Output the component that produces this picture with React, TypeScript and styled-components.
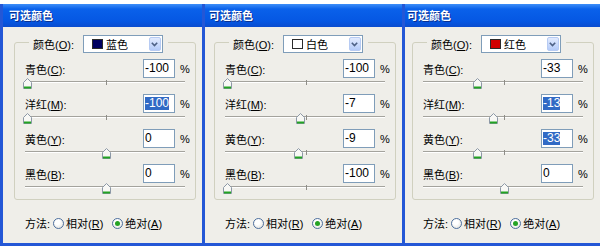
import styled, { createGlobalStyle } from "styled-components"

const GlobalStyle = createGlobalStyle`
  html, body {
    margin: 0;
    padding: 0;
    background: #fff;
  }
  body {
    font-family: "Liberation Sans", "Noto Sans CJK SC", sans-serif;
    font-size: 11px;
    color: #000;
  }
`

const Screen = styled.div`
  display: flex;
  width: 600px;
  height: 250px;
  padding-top: 4px;
  box-sizing: border-box;
  overflow: hidden;
  background: #fff;
`

const Window = styled.div<{ $width?: number }>`
  ${p => (p.$width ? `width: ${p.$width}px; flex: none;` : "flex: 1;")}
  height: 242px;
  box-sizing: border-box;
  display: flex;
  flex-direction: column;
  border-left: 3px solid #2457d6;
  border-bottom: 3px solid #2457d6;
  background: #efeee9;
`

const TitleBar = styled.div<{ $inset: number }>`
  height: 23px;
  line-height: 23px;
  padding-left: ${p => p.$inset - 5}px;
  background: linear-gradient(#3d8ef8 0%, #0a61ea 22%, #0557e3 75%, #0a4ccf 100%);
  color: #fff;
  font-family: "Noto Sans CJK SC", sans-serif;
  font-size: 11px;
  font-weight: bold;
  text-shadow: 1px 1px 0 #0b2f8f;
`

const Body = styled.div<{ $inset: number }>`
  flex: 1;
  padding: 15px 0 0 ${p => p.$inset}px;
`

const Group = styled.div`
  width: 182px;
  height: 158px;
  box-sizing: border-box;
  border: 1px solid #d0d0bf;
  border-radius: 3px;
  display: flex;
  flex-direction: column;
`

const Legend = styled.div`
  display: flex;
  align-items: center;
  gap: 9px;
  align-self: flex-start;
  height: 18px;
  margin: -8px 0 0 14px;
  padding: 0 5px 0 4px;
  background: #efeee9;
`

const Label = styled.span`
  font-family: "Liberation Sans", "Noto Sans CJK SC", sans-serif;
  white-space: nowrap;
`

const ColorSelect = styled.div`
  width: 80px;
  height: 18px;
  box-sizing: border-box;
  border: 1px solid #7f9db9;
  background: #fff;
  display: flex;
  align-items: center;
  padding-left: 8px;
`

const Swatch = styled.span<{ $color: string }>`
  width: 11px;
  height: 10px;
  box-sizing: border-box;
  border: 1px solid #2a2a2a;
  background: ${p => p.$color};
  margin-right: 3px;
`

const SelectText = styled.span`
  flex: 1;
  font-family: "Noto Sans CJK SC", sans-serif;
`

const DropButton = styled.span`
  width: 12px;
  height: 14px;
  margin-right: 1px;
  box-sizing: border-box;
  border: 1px solid #b7cbf3;
  border-radius: 2px;
  background: linear-gradient(#e2ebfe, #b4cbf9);
  display: flex;
  align-items: center;
  justify-content: center;
`

const Fields = styled.div`
  margin-top: 6px;
  display: flex;
  flex-direction: column;
`

const Field = styled.div`
  height: 35px;
  display: flex;
  flex-direction: column;
`

const FieldHead = styled.div`
  height: 19px;
  display: flex;
  align-items: center;
  padding: 0 3px 0 10px;
`

const FieldLabel = styled(Label)`
  flex: 1;
`

const NumberBox = styled.div`
  width: 32px;
  height: 19px;
  box-sizing: border-box;
  border: 1px solid #7f9db9;
  background: #fff;
  padding-left: 1px;
  display: flex;
  align-items: center;
  font-family: "Liberation Sans", sans-serif;
  font-size: 12px;
`

const NumberText = styled.span<{ $selected: boolean }>`
  line-height: 13px;
  background: ${p => (p.$selected ? "#316ac5" : "transparent")};
  color: ${p => (p.$selected ? "#fff" : "#000")};
`

const Percent = styled.span`
  width: 12px;
  margin-left: 5px;
  font-family: "Liberation Sans", sans-serif;
`

const Slider = styled.div`
  position: relative;
  width: 160px;
  height: 16px;
  margin-left: 10px;
`

const Track = styled.div`
  position: absolute;
  left: 0;
  right: 0;
  top: 3px;
  border-top: 1px solid #a4a39d;
  border-bottom: 1px solid #fff;
`

const Tick = styled.div`
  position: absolute;
  left: 81px;
  top: 2px;
  width: 1px;
  height: 5px;
  background: #8e8d88;
`

const Thumb = styled.svg`
  position: absolute;
  top: 0;
`

const MethodRow = styled.div`
  display: flex;
  align-items: center;
  height: 16px;
  margin-top: 15px;
  padding-left: 11px;
`

const Option = styled.label`
  display: flex;
  align-items: center;
  gap: 2px;
  margin-left: 3px;
  margin-right: 6px;
`

const Radio = styled.span<{ $checked: boolean }>`
  width: 11px;
  height: 11px;
  box-sizing: border-box;
  border-radius: 50%;
  border: 1px solid #4d6f9e;
  background: radial-gradient(circle at 40% 35%, #fff 30%, #dcdcd6 100%);
  display: flex;
  align-items: center;
  justify-content: center;

  &::after {
    content: "";
    width: 5px;
    height: 5px;
    border-radius: 50%;
    background: ${p => (p.$checked ? "#25a325" : "transparent")};
  }
`

const channels = [
  { name: "青色", key: "C" },
  { name: "洋红", key: "M" },
  { name: "黄色", key: "Y" },
  { name: "黑色", key: "B" },
]

const panels = [
  { width: 202, inset: 11, color: "#000060", colorName: "蓝色", values: [-100, -100, 0, 0], selected: [1] },
  { width: 200, inset: 9, color: "#ffffff", colorName: "白色", values: [-100, -7, -9, -100], selected: [] as number[] },
  { inset: 7, color: "#d00000", colorName: "红色", values: [-33, -13, -33, 0], selected: [1, 2] },
]

function thumbLeft(v: number) {
  return 2 + ((v + 100) / 200) * 158 - 4.5
}

function ColorPanel({ panel }: { panel: (typeof panels)[number] }) {
  return (
    <Window $width={panel.width}>
      <TitleBar $inset={panel.inset}>可选颜色</TitleBar>
      <Body $inset={panel.inset}>
        <Group>
          <Legend>
            <Label>
              颜色(<u>O</u>):
            </Label>
            <ColorSelect>
              <Swatch $color={panel.color} />
              <SelectText>{panel.colorName}</SelectText>
              <DropButton>
                <svg width="7" height="5" viewBox="0 0 7 5">
                  <polyline points="0.8,0.8 3.5,3.6 6.2,0.8" fill="none" stroke="#4d6185" strokeWidth="1.6" />
                </svg>
              </DropButton>
            </ColorSelect>
          </Legend>
          <Fields>
            {channels.map((ch, i) => (
              <Field key={ch.key}>
                <FieldHead>
                  <FieldLabel>
                    {ch.name}(<u>{ch.key}</u>):
                  </FieldLabel>
                  <NumberBox>
                    <NumberText $selected={panel.selected.includes(i)}>{panel.values[i]}</NumberText>
                  </NumberBox>
                  <Percent>%</Percent>
                </FieldHead>
                <Slider>
                  <Track />
                  <Tick />
                  <Thumb
                    width="9"
                    height="11"
                    viewBox="0 0 9 11"
                    style={{ left: thumbLeft(panel.values[i]) }}
                  >
                    <path d="M4.5 0.5 L8.5 4.5 V10.5 H0.5 V4.5 Z" fill="#f8f8f5" stroke="#8c98a6" />
                    <path d="M1 9.5 H8" stroke="#22a322" strokeWidth="2" />
                  </Thumb>
                </Slider>
              </Field>
            ))}
          </Fields>
        </Group>
        <MethodRow>
          <Label>方法:</Label>
          <Option>
            <Radio $checked={false} />
            <Label>
              相对(<u>R</u>)
            </Label>
          </Option>
          <Option>
            <Radio $checked={true} />
            <Label>
              绝对(<u>A</u>)
            </Label>
          </Option>
        </MethodRow>
      </Body>
    </Window>
  )
}

export default function App() {
  return (
    <>
      <GlobalStyle />
      <Screen>
        {panels.map((p, i) => (
          <ColorPanel key={i} panel={p} />
        ))}
      </Screen>
    </>
  )
}
